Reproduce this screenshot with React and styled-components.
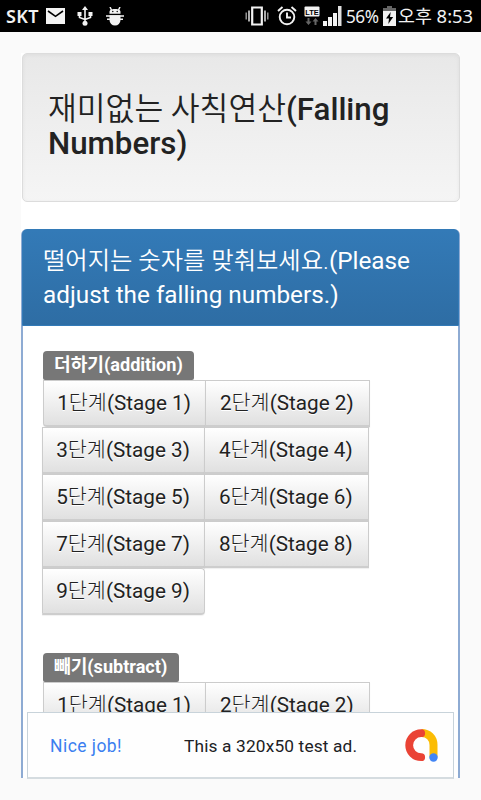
import React from 'react';
import styled, { createGlobalStyle } from 'styled-components';

const GlobalStyle = createGlobalStyle`
  * {
    box-sizing: border-box;
  }
  body {
    margin: 0;
    background: #fafafa;
    font-family: Roboto, 'Noto Sans CJK KR', sans-serif;
    color: #222;
    overflow: hidden;
  }
`;

const Screen = styled.div`
  display: flex;
  flex-direction: column;
  width: 481px;
  height: 800px;
  overflow: hidden;
`;

const StatusBar = styled.header`
  display: flex;
  align-items: center;
  justify-content: space-between;
  flex: none;
  height: 32px;
  padding: 0 7px 0 6px;
  background: #000;
  color: #f2f2f2;
`;

const StatusGroup = styled.div`
  display: flex;
  align-items: center;
`;

const Carrier = styled.span`
  width: 40px;
  font-family: 'Noto Sans', sans-serif;
  font-size: 18px;
  font-weight: 600;
  letter-spacing: 0.3px;
  line-height: 32px;
`;

const Percent = styled.span`
  width: 36px;
  font-family: 'Noto Sans', sans-serif;
  font-size: 17.2px;
  letter-spacing: -0.5px;
  line-height: 33px;
  white-space: nowrap;
`;

const Clock = styled.span`
  width: 76px;
  font-family: 'Noto Sans', 'Noto Sans CJK KR', sans-serif;
  font-size: 18.4px;
  line-height: 34px;
  white-space: nowrap;
`;

const Page = styled.main`
  flex: none;
  width: 439px;
  height: 725px;
  margin: 21px 0 0 21px;
  background: #fff;
  overflow: hidden;
`;

const Well = styled.section`
  height: 149px;
  margin-left: 1px;
  padding: 39px 25px;
  border: 1px solid #dcdcdc;
  border-radius: 5px;
  background: linear-gradient(#e8e8e8, #f5f5f5);
  box-shadow: inset 0 1px 4px rgba(0, 0, 0, 0.05);
`;

const Title = styled.h1`
  margin: 0;
  font-size: 31.3px;
  font-weight: 500;
  line-height: 34px;
  white-space: nowrap;
`;

const Korean = styled.span`
  font-weight: ${(props) => props.$weight || 300};
`;

const Panel = styled.section`
  height: 560px;
  margin-top: 27px;
  border: 2px solid #8eabd3;
  border-width: 0 2px;
  border-radius: 6px 6px 0 0;
  background: #fff;
`;

const PanelHeading = styled.h2`
  height: 97px;
  margin: 0 -1px;
  padding: 14px 20px;
  border: 1px solid #337ab7;
  border-radius: 5px 5px 0 0;
  background: linear-gradient(#337ab7, #2e6da4);
  color: #fff;
  font-size: 24.3px;
  font-weight: 400;
  line-height: 34px;
  white-space: nowrap;
`;

const PanelBody = styled.div`
  padding: 25px 18px 0 20px;
`;

const StageGroup = styled.div`
  display: flex;
  flex-direction: column;
  height: 302px;
`;

const Label = styled.span`
  align-self: flex-start;
  flex: none;
  width: ${(props) => props.$width}px;
  height: 29px;
  padding-left: 11px;
  border-radius: 4px 4px 2px 2px;
  background: #777;
  color: #fff;
  font-size: 18.1px;
  font-weight: 700;
  line-height: 28px;
  white-space: nowrap;
`;

const Row = styled.div`
  display: flex;
  flex: none;
  margin-left: ${(props) => (props.$first ? 0 : -1)}px;
`;

const StageButton = styled.button`
  flex: none;
  width: ${(props) => (props.$last ? 164.5 : 163)}px;
  height: 47px;
  margin: 0 -1px 0 0;
  padding: 0 1px 0 0;
  border: 1px solid #ccc;
  border-bottom: 2px solid #cdcdcd;
  border-radius: ${(props) => props.$radius || 0};
  background: linear-gradient(#fff, #e0e0e0);
  color: #222;
  font-family: inherit;
  font-size: 20.7px;
  line-height: 44px;
  text-shadow: 0 1px 0 #fff;
  box-shadow: 0 1px 1px rgba(0, 0, 0, 0.06);
  white-space: nowrap;
`;

// the ad floats over the bottom of the page
const AdBanner = styled.aside`
  position: absolute;
  left: 27px;
  top: 712px;
  display: flex;
  align-items: center;
  width: 427px;
  height: 67px;
  padding-left: 22px;
  border: 1px solid #c8d3da;
  border-bottom: 2px solid #d5dce0;
  background: #fefefe;
`;

const AdAction = styled.span`
  width: 134px;
  color: #3b7ff0;
  font-size: 17.5px;
  font-weight: 400;
  letter-spacing: 0.45px;
  line-height: 24px;
  padding-top: 1px;
`;

const AdText = styled.span`
  width: 221px;
  color: #202124;
  font-size: 17.3px;
  letter-spacing: 0.16px;
  line-height: 24px;
  padding-top: 1px;
  white-space: nowrap;
`;

const MailIcon = () => (
  <svg width="19" height="16" viewBox="0 0 19 16">
    <path d="M0 0h19v16H0z" fill="#f4f4f4" />
    <path d="M2 3l7.5 5.3L17 3" fill="none" stroke="#000" strokeWidth="1.6" />
  </svg>
);

const UsbIcon = () => (
  <svg width="16" height="20" viewBox="0 0 16 20" style={{ marginLeft: 12 }}>
    <g fill="none" stroke="#f2f2f2" strokeWidth="1.6">
      <path d="M8 3v14M2.5 8v3.5L8 13.500M13.500 8v3.500L8 13.500" />
    </g>
    <path d="M8 0l3 4H5zM.5 6h4v4h-4zM11.500 6h4v4h-4z" fill="#f2f2f2" />
    <circle cx="8" cy="17.300" r="2.500" fill="#f2f2f2" />
  </svg>
);

const BugIcon = () => (
  <svg width="18" height="19" viewBox="0 0 18 19" style={{ marginLeft: 13 }}>
    <path d="M3.500 6.800V5C3.500 3 5 2 9 2s5.500 1 5.500 3v1.800z" fill="#f2f2f2" />
    <path
      d="M4 0l1.500 3M14 0l-1.500 3M0 8.900h18M1 12.200h16"
      stroke="#f2f2f2"
      strokeWidth="1.500"
    />
    <path d="M3.500 8.200h11v4.800a5.500 5.500 0 0 1-11 0z" fill="#f2f2f2" />
    <circle cx="6.800" cy="4.500" r=".7" />
    <circle cx="11.200" cy="4.500" r=".7" />
  </svg>
);

const VibrateIcon = () => (
  <svg width="24" height="20" viewBox="0 0 24 20">
    <path d="M7.200 1.500h9.600v17H7.200z" fill="none" stroke="#f2f2f2" strokeWidth="2.200" />
    <path d="M4 4.500v11M20 4.500v11" stroke="#e5e5e5" strokeWidth="1.500" />
    <path d="M1.200 6.500v7M22.800 6.500v7" stroke="#aaa" strokeWidth="1.300" />
  </svg>
);

const AlarmIcon = () => (
  <svg width="20" height="20" viewBox="0 0 20 20" style={{ marginLeft: 8 }}>
    <g fill="none" stroke="#f2f2f2" strokeWidth="1.900">
      <circle cx="10" cy="11" r="7.300" />
      <path d="M10 6.500v5h4M1 5l4.500-4M19 5l-4.500-4" />
    </g>
  </svg>
);

const LteText = styled.text`
  font: 700 8px 'Liberation Sans', sans-serif;
`;

const LteIcon = () => (
  <svg width="16" height="20" viewBox="0 0 16 20" style={{ marginLeft: 7 }}>
    <rect x=".5" y=".5" width="15" height="10" rx="1" fill="#f2f2f2" />
    <LteText x="1.200" y="8.500" textLength="13.500" lengthAdjust="spacingAndGlyphs">
      LTE
    </LteText>
    <path d="M3.500 12h2v3.500h2L4.500 19l-3-3.500h2zM10.500 19h2v-3.500h2l-3-3.500-3 3.500h2z" fill="#666" />
  </svg>
);

const SignalIcon = () => (
  <svg width="19" height="20" viewBox="0 0 19 20" style={{ marginLeft: 3, marginRight: 4 }}>
    <path d="M0 15h4v5H0zM5 11h4v9H5zM10 7h4v13h-4z" fill="#f2f2f2" />
    <path d="M15 0h3.500v20H15z" fill="#e0e0e0" />
  </svg>
);

const BatteryIcon = () => (
  <svg width="13" height="20" viewBox="0 0 13 20" style={{ marginRight: 2, marginLeft: 1 }}>
    <path d="M4 0h5v2h4v3H0V2h4z" fill="#666" />
    <path d="M0 5h13v15H0z" fill="#f2f2f2" />
    <path d="M7.700 6L3 12.500h3L5.300 18l4.900-7H7z" />
  </svg>
);

const AdMobIcon = () => (
  <svg width="33" height="33" viewBox="0 0 33 33">
    <path d="M16.500 4c7 0 12 5 12 12v12" fill="none" stroke="#fbbc04" strokeWidth="8" />
    <path
      d="M16.200 4.200a12 12 0 0 0 0 24"
      fill="none"
      stroke="#ea4335"
      strokeWidth="7.800"
      strokeLinecap="round"
    />
    <circle cx="28.500" cy="28.500" r="4.200" fill="#4285f4" />
  </svg>
);

const additionRows = [[1, 2], [3, 4], [5, 6], [7, 8], [9]];
const subtractRows = [[1, 2]];

const getRadius = (stage) => {
  if (stage === 1) return '0 0 0 4px';
  if (stage === 9) return '0 4px 4px 0';
  return '0';
};

function Stages({ label, width, rows }) {
  return (
    <StageGroup>
      <Label $width={width}>{label}</Label>
      {rows.map((row) => (
        <Row key={row[0]} $first={row[0] === 1}>
          {row.map((stage) => (
            <StageButton
              key={stage}
              $last={stage % 2 === 0}
              $radius={getRadius(stage)}
            >
              {stage}
              <Korean>단계</Korean>(Stage {stage})
            </StageButton>
          ))}
        </Row>
      ))}
    </StageGroup>
  );
}

export default function App() {
  return (
    <>
      <GlobalStyle />
      <Screen>
        <StatusBar>
          <StatusGroup>
            <Carrier>SKT</Carrier>
            <MailIcon />
            <UsbIcon />
            <BugIcon />
          </StatusGroup>
          <StatusGroup>
            <VibrateIcon />
            <AlarmIcon />
            <LteIcon />
            <SignalIcon />
            <Percent>56%</Percent>
            <BatteryIcon />
            <Clock>오후 8:53</Clock>
          </StatusGroup>
        </StatusBar>
        <Page>
          <Well>
            <Title>
              <Korean $weight={350}>재미없는 사칙연산</Korean>(Falling
              <br />
              Numbers)
            </Title>
          </Well>
          <Panel>
            <PanelHeading>
              <Korean $weight={350}>떨어지는 숫자를 맞춰보세요.</Korean>(Please
              <br />
              adjust the falling numbers.)
            </PanelHeading>
            <PanelBody>
              <Stages label="더하기(addition)" width={151} rows={additionRows} />
              <Stages label="빼기(subtract)" width={136} rows={subtractRows} />
            </PanelBody>
          </Panel>
        </Page>
        <AdBanner>
          <AdAction>Nice job!</AdAction>
          <AdText>This a 320x50 test ad.</AdText>
          <AdMobIcon />
        </AdBanner>
      </Screen>
    </>
  );
}
